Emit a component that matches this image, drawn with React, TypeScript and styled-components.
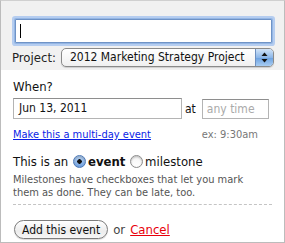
import { createGlobalStyle, styled } from "styled-components";

const GlobalStyle = createGlobalStyle`
    body {
        margin: 0;
        background: #ffffff;
        font-family: "DejaVu Sans Condensed", "DejaVu Sans", sans-serif;
        font-stretch: condensed;
        color: #111;
    }
`;

const Panel = styled.div`
    width: 283px;
    height: 241px;
    border: 1px solid #bcbcbc;
    border-top-color: #d0d0d0;
    background: #fff;
    overflow: hidden;
`;

const Header = styled.div`
    background: #f1f1f1;
    height: 69px;
    padding: 15px 10px 0 11px;
    box-sizing: border-box;
`;

const TitleInput = styled.div`
    height: 24px;
    margin: 3px 2px 0 3px;
    background: #fff;
    border: 1px solid #6f93c6;
    box-shadow: 0 0 0 1px #94b6e4, 0 0 0 3px #b5cdf0;
    border-radius: 1px;
    box-sizing: border-box;
    padding: 4px 0 0 4px;
`;

const Caret = styled.div`
    width: 1px;
    height: 14px;
    background: #000;
`;

const ProjectRow = styled.div`
    display: flex;
    align-items: center;
    gap: 5px;
    margin-top: 5px;
    font-size: 13px;
`;

const Label = styled.span`
    color: #222;
`;

const Select = styled.div`
    flex: 1;
    height: 19px;
    display: flex;
    align-items: stretch;
    border: 1px solid #8a8a8a;
    border-radius: 5px;
    background: linear-gradient(#ffffff, #f0f0f0);
    box-shadow: 0 1px 1px rgba(0, 0, 0, 0.15);
    box-sizing: border-box;
    overflow: hidden;
    font-size: 12px;
`;

const SelectText = styled.span`
    flex: 1;
    padding-left: 8px;
    line-height: 17px;
    white-space: nowrap;
    color: #111;
`;

const SelectArrows = styled.span`
    width: 17px;
    border-left: 1px solid #6d8fc0;
    background: linear-gradient(#d2e4f8, #8cb6e8 50%, #6aa0e0 51%, #a9cdf2);
    display: flex;
    align-items: center;
    justify-content: center;
`;

const Body = styled.div`
    padding: 9px 12px 0 12px;
    font-size: 13px;
`;

const Heading = styled.div`
    line-height: 15px;
`;

const DateRow = styled.div`
    display: flex;
    align-items: center;
    margin-top: 4px;
`;

const TextBox = styled.div<{ $w: number; $muted?: boolean }>`
    width: ${(p) => p.$w}px;
    height: ${(p) => (p.$muted ? 20 : 21)}px;
    border: 1px solid #b4b4b4;
    border-top-color: #8e8e8e;
    box-sizing: border-box;
    background: #fff;
    padding-left: ${(p) => (p.$muted ? 4 : 5)}px;
    line-height: 19px;
    font-size: 12px;
    color: ${(p) => (p.$muted ? "#aaa" : "#111")};
    white-space: nowrap;
`;

const At = styled.span`
    margin: 0 6px 0 3px;
    font-size: 12px;
`;

const HintRow = styled.div`
    display: flex;
    justify-content: space-between;
    align-items: center;
    margin-top: 9px;
    font-size: 11px;
    padding-right: 14px;
`;

const Link = styled.a<{ $red?: boolean }>`
    color: ${(p) => (p.$red ? "#e8000b" : "#0a1ee6")};
    text-decoration: underline;
    cursor: pointer;
`;

const Hint = styled.span`
    color: #777;
`;

const TypeRow = styled.div`
    display: flex;
    align-items: center;
    margin-top: 13px;
    font-size: 13px;
`;

const Radio = styled.span<{ $on?: boolean }>`
    width: 13px;
    height: 13px;
    border-radius: 50%;
    box-sizing: border-box;
    border: 1px solid ${(p) => (p.$on ? "#4d79b7" : "#8c8c8c")};
    background: ${(p) =>
        p.$on
            ? "radial-gradient(circle, #111 0 2px, transparent 2.5px), linear-gradient(#bcd6f4, #6fa0e0)"
            : "linear-gradient(#f4f4f4, #ffffff)"};
    box-shadow: inset 0 1px 2px rgba(0, 0, 0, 0.25);
    margin: 0 2px 0 1px;
`;

const Choice = styled.span<{ $bold?: boolean }>`
    font-weight: ${(p) => (p.$bold ? "bold" : "normal")};
`;

const Note = styled.p`
    margin: 4px 0 0;
    font-size: 11px;
    line-height: 13px;
    color: #555;
`;

const Divider = styled.div`
    margin-top: 5px;
    border-top: 1px dashed #c4c4c4;
`;

const Actions = styled.div`
    display: flex;
    align-items: center;
    gap: 5px;
    margin-top: 15px;
    font-size: 13px;
`;

const Button = styled.button`
    height: 19px;
    padding: 0 7px;
    border: 1px solid #7d7d7d;
    border-radius: 10px;
    background: linear-gradient(#ffffff, #ececec 60%, #f6f6f6);
    box-shadow: 0 1px 1px rgba(0, 0, 0, 0.15);
    font-family: inherit;
    font-size: 12px;
    color: #111;
    margin-left: 1px;
`;

const Or = styled.span`
    color: #444;
`;

const App = () => {
    return (
        <>
            <GlobalStyle />
            <Panel>
                <Header>
                    <TitleInput>
                        <Caret />
                    </TitleInput>
                    <ProjectRow>
                        <Label>Project:</Label>
                        <Select>
                            <SelectText>2012 Marketing Strategy Project</SelectText>
                            <SelectArrows>
                                <svg width="7" height="11" viewBox="0 0 7 11">
                                    <path d="M3.5 0.5 L6.5 4 L0.5 4 Z" fill="#111" />
                                    <path d="M3.5 10.5 L6.5 7 L0.5 7 Z" fill="#111" />
                                </svg>
                            </SelectArrows>
                        </Select>
                    </ProjectRow>
                </Header>
                <Body>
                    <Heading>When?</Heading>
                    <DateRow>
                        <TextBox $w={169}>Jun 13, 2011</TextBox>
                        <At>at</At>
                        <TextBox $w={67} $muted>
                            any time
                        </TextBox>
                    </DateRow>
                    <HintRow>
                        <Link>Make this a multi-day event</Link>
                        <Hint>ex: 9:30am</Hint>
                    </HintRow>
                    <TypeRow>
                        <span>This is an&nbsp;</span>
                        <Radio $on />
                        <Choice $bold>event</Choice>
                        &nbsp;
                        <Radio />
                        <Choice>milestone</Choice>
                    </TypeRow>
                    <Note>
                        Milestones have checkboxes that let you mark
                        <br />
                        them as done. They can be late, too.
                    </Note>
                    <Divider />
                    <Actions>
                        <Button>Add this event</Button>
                        <Or>or</Or>
                        <Link $red>Cancel</Link>
                    </Actions>
                </Body>
            </Panel>
        </>
    );
};

export default App;
